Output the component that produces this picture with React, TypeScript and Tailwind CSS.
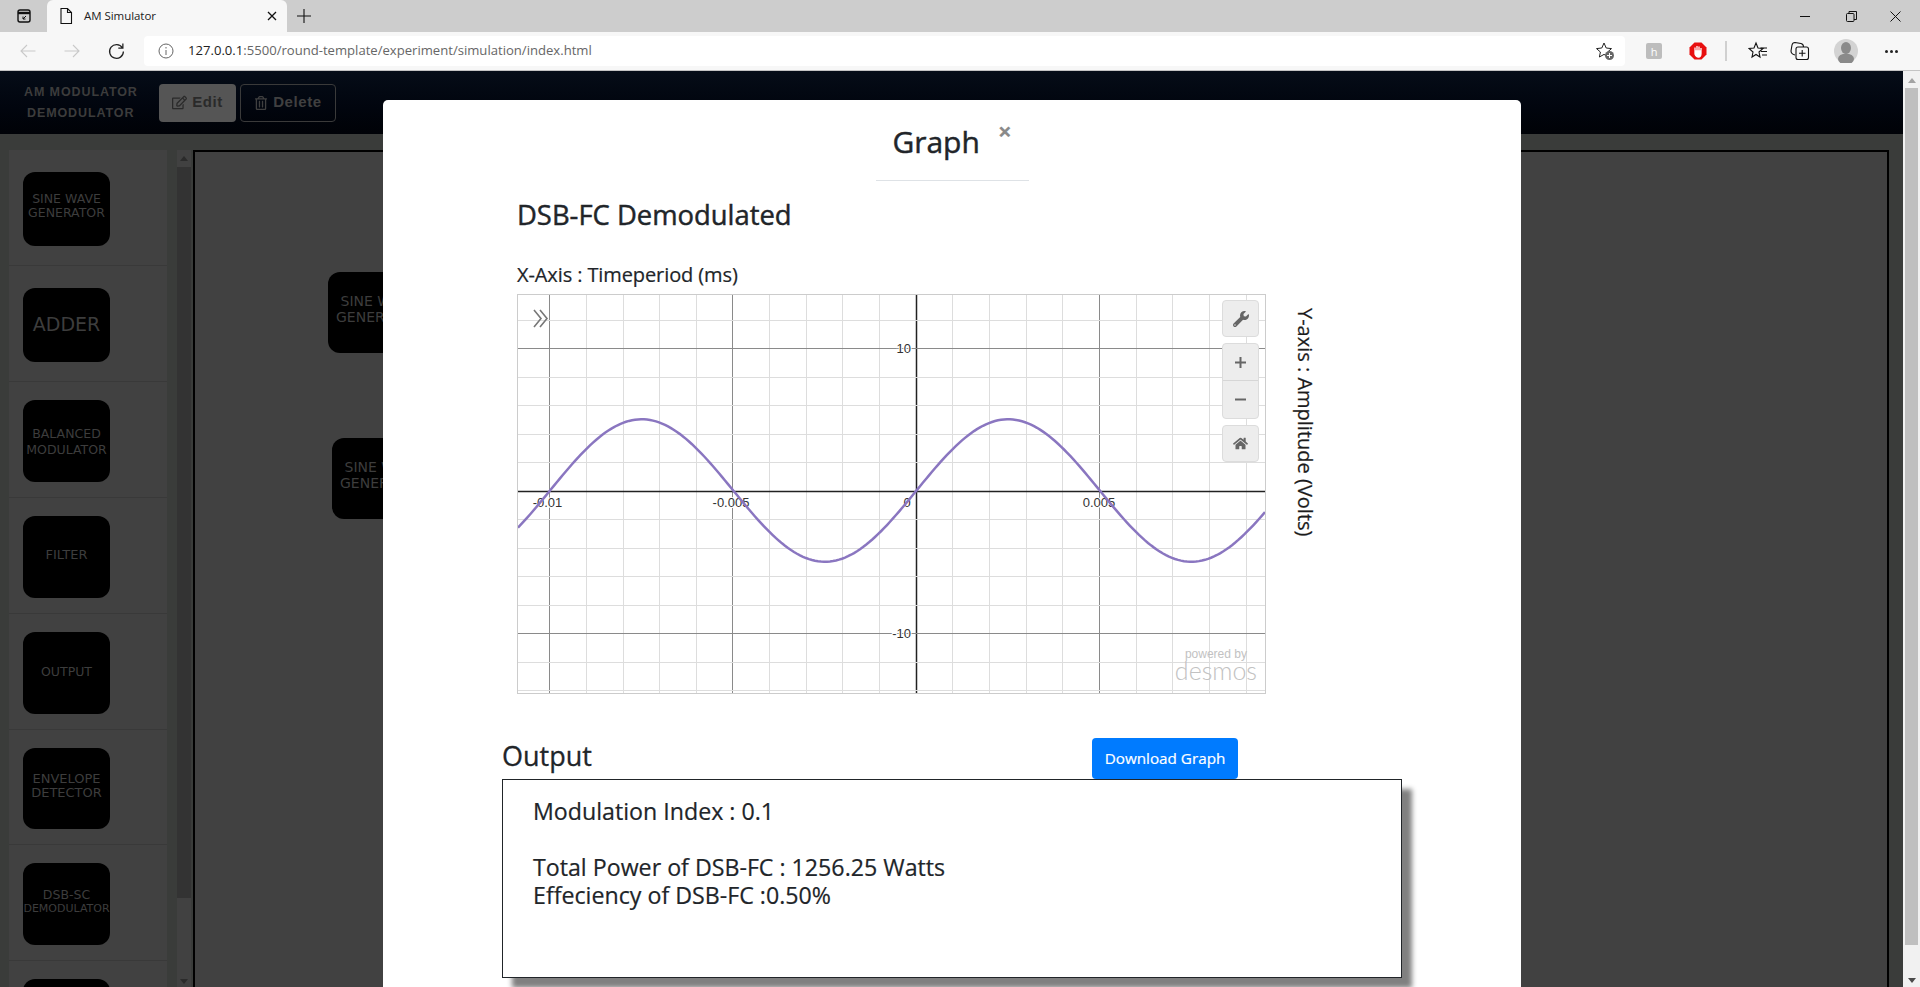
import { FaHome, FaRegEdit, FaRegTrashAlt, FaWrench } from "react-icons/fa";

const palette = [
  { lines: [["SINE WAVE", "text-[12.5px] leading-[14px]"], ["GENERATOR", "text-[12.5px] leading-[14px]"]], box: "h-[74px] pt-[20px]", row: "h-[116px] pt-[22px]" },
  { lines: [["ADDER", "text-[19px] leading-[24px]"]], box: "h-[74px] pt-[24px]", row: "h-[116px] pt-[22px]" },
  { lines: [["BALANCED", "text-[12.5px] leading-[16px]"], ["MODULATOR", "text-[12.5px] leading-[16px]"]], box: "h-[82px] pt-[26px]", row: "h-[116px] pt-[18px]" },
  { lines: [["FILTER", "text-[13px] leading-[15px]"]], box: "h-[82px] pt-[31px]", row: "h-[116px] pt-[18px]" },
  { lines: [["OUTPUT", "text-[12.5px] leading-[15px]"]], box: "h-[82px] pt-[32px]", row: "h-[116px] pt-[18px]" },
  { lines: [["ENVELOPE", "text-[13px] leading-[14px]"], ["DETECTOR", "text-[13px] leading-[14px]"]], box: "h-[81px] pt-[24px]", row: "h-[115px] pt-[18px]" },
  { lines: [["DSB-SC", "text-[12.5px] leading-[15px]"], ["DEMODULATOR", "text-[11px] leading-[14px]"]], box: "h-[82px] pt-[24px]", row: "h-[116px] pt-[18px]" },
  { lines: [], box: "h-[82px]", row: "h-[116px] pt-[18px]" },
];

const GRAPH_W = 747;
const GRAPH_H = 398;
const ORIGIN_X = 398.5;
const ORIGIN_Y = 195.5;
const MINOR_X = 36.65;
const MINOR_Y = 28.5;

function sineCurve() {
  const pts: string[] = [];
  for (let x = 0; x <= GRAPH_W; x += 3) {
    const y = ORIGIN_Y - 71.25 * Math.sin((2 * Math.PI * (x - ORIGIN_X)) / (MINOR_X * 10));
    pts.push(`${x},${y.toFixed(2)}`);
  }
  return pts.join(" ");
}

function Graph() {
  const xLines = [];
  for (let k = -10; k <= 9; k++) xLines.push(k);
  const yLines = [];
  for (let j = -6; j <= 7; j++) yLines.push(j);
  const labelStyle = { paintOrder: "stroke" as const };

  return (
    <div className="relative h-[400px] w-[749px] shrink-0 border border-[#cccccc] bg-white [-webkit-text-stroke:0]">
      <svg width={GRAPH_W} height={GRAPH_H} className="block">
        {xLines.map((k) => (
          <line
            key={k}
            x1={Math.round(397.7 + k * MINOR_X) + 0.5}
            x2={Math.round(397.7 + k * MINOR_X) + 0.5}
            y1={0}
            y2={GRAPH_H}
            stroke={k === 0 ? "#222222" : k % 5 === 0 ? "#8a8a8a" : "#dddddd"}
            strokeWidth={k === 0 ? 1.5 : 1}
          />
        ))}
        {yLines.map((j) => (
          <line
            key={j}
            x1={0}
            x2={GRAPH_W}
            y1={Math.round(ORIGIN_Y + j * MINOR_Y) + 0.5}
            y2={Math.round(ORIGIN_Y + j * MINOR_Y) + 0.5}
            stroke={j === 0 ? "#222222" : j % 5 === 0 ? "#8a8a8a" : "#dddddd"}
            strokeWidth={j === 0 ? 1.5 : 1}
          />
        ))}
        <g fontFamily="'Liberation Sans', Arial, sans-serif" fontSize="13" fill="#333333" stroke="#ffffff" strokeWidth="2" style={labelStyle}>
          <text x={393} y={57.5} textAnchor="end">10</text>
          <text x={393} y={342.5} textAnchor="end">-10</text>
          <text x={29.5} y={211.5} textAnchor="middle">-0.01</text>
          <text x={213} y={211.5} textAnchor="middle">-0.005</text>
          <text x={389} y={211.5} textAnchor="middle">0</text>
          <text x={581} y={211.5} textAnchor="middle">0.005</text>
        </g>
        <polyline points={sineCurve()} fill="none" stroke="#8a76c0" strokeWidth="2.5" />
        <g fill="none" stroke="#777777" strokeWidth="1.6">
          <path d="M16 15 L23 23.5 L16 32" />
          <path d="M22 15 L29 23.5 L22 32" />
        </g>
      </svg>

      <div className="absolute top-[5px] right-[6px] flex h-[37px] w-[37px] items-center justify-center rounded border border-[#dcdcdc] bg-[#ededed]">
        <FaWrench className="h-[16px] w-[16px] text-[#666666]" />
      </div>
      <div className="absolute top-[48px] right-[6px] flex h-[76px] w-[37px] flex-col rounded border border-[#dcdcdc] bg-[#ededed] text-[#666666]">
        <div className="flex h-[37px] items-center justify-center border-b border-[#d6d6d6]">
          <svg width="13" height="13" viewBox="0 0 13 13">
            <path d="M6.5 1 V12 M1 6.5 H12" stroke="currentColor" strokeWidth="2" />
          </svg>
        </div>
        <div className="flex flex-1 items-center justify-center">
          <svg width="13" height="13" viewBox="0 0 13 13">
            <path d="M1 6.5 H12" stroke="currentColor" strokeWidth="2" />
          </svg>
        </div>
      </div>
      <div className="absolute top-[130px] right-[6px] flex h-[37px] w-[37px] items-center justify-center rounded border border-[#dcdcdc] bg-[#ededed]">
        <FaHome className="h-[15px] w-[15px] text-[#666666]" />
      </div>

      <div className="absolute right-[8px] bottom-[13px] flex flex-col items-center text-[#c2c2c2]">
        <span className="font-['Liberation_Sans',sans-serif] text-[12px] leading-[12px]">powered by</span>
        <span className="font-['Lato',sans-serif] text-[25px] leading-[20px] font-light">desmos</span>
      </div>
    </div>
  );
}

function BrowserChrome() {
  return (
    <div className="shrink-0 font-['Open_Sans',sans-serif]">
      <div className="flex h-[32px] items-end bg-[#cdcdcd]">
        <div className="flex h-[32px] w-[47px] items-center justify-center">
          <svg width="16" height="16" viewBox="0 0 16 16" fill="none" stroke="#111111" strokeWidth="1.4">
            <rect x="2" y="2" width="12" height="12" rx="2" />
            <path d="M2 5 H14" strokeWidth="2.4" />
            <path d="M10 8 L7 11 M7 8.5 V11 H9.5" strokeWidth="1" />
          </svg>
        </div>
        <div className="flex h-[32px] w-[240px] items-center rounded-t-md bg-[#f7f7f7] pr-[10px] pl-[12px]">
          <svg width="14" height="18" viewBox="0 0 14 18" fill="none" stroke="#111111" strokeWidth="1.1">
            <path d="M2 1.5 H8.5 L12.5 5.5 V16.5 H2 Z M8.5 1.5 V5.5 H12.5" />
          </svg>
          <span className="ml-[11px] flex-1 text-[11.5px] tracking-[-0.05px] text-[#222222]">AM Simulator</span>
          <svg width="10" height="10" viewBox="0 0 10 10" stroke="#111111" strokeWidth="1.3">
            <path d="M1 1 L9 9 M9 1 L1 9" />
          </svg>
        </div>
        <div className="flex h-[32px] w-[34px] items-center justify-center">
          <svg width="14" height="14" viewBox="0 0 14 14" stroke="#111111" strokeWidth="1.1">
            <path d="M7 0 V14 M0 7 H14" />
          </svg>
        </div>
        <div className="ml-auto flex h-[32px] items-center">
          <div className="flex w-[46px] justify-center">
            <svg width="10" height="10" viewBox="0 0 10 10" stroke="#111111" strokeWidth="1">
              <path d="M0 5.5 H10" />
            </svg>
          </div>
          <div className="flex w-[46px] justify-center">
            <svg width="11" height="11" viewBox="0 0 11 11" fill="none" stroke="#111111" strokeWidth="1">
              <rect x="0.5" y="2.5" width="7.5" height="8" rx="1" />
              <path d="M3 2.5 V0.5 H10.5 V8.5 H8" />
            </svg>
          </div>
          <div className="flex w-[46px] justify-center pr-[4px]">
            <svg width="11" height="11" viewBox="0 0 11 11" stroke="#111111" strokeWidth="1">
              <path d="M0.5 0.5 L10.5 10.5 M10.5 0.5 L0.5 10.5" />
            </svg>
          </div>
        </div>
      </div>
      <div className="flex h-[39px] items-center border-b border-[#c4c4c4] bg-[#f7f7f7]">
        <div className="flex w-[144px] items-center">
          <div className="flex w-[56px] justify-center">
            <svg width="16" height="14" viewBox="0 0 16 14" fill="none" stroke="#c9c9c9" strokeWidth="1.1">
              <path d="M15.5 7 H1 M7 1 L1 7 L7 13" />
            </svg>
          </div>
          <div className="-ml-[12px] flex w-[56px] justify-center">
            <svg width="16" height="14" viewBox="0 0 16 14" fill="none" stroke="#c9c9c9" strokeWidth="1.1">
              <path d="M0.5 7 H15 M9 1 L15 7 L9 13" />
            </svg>
          </div>
          <div className="-ml-[12px] flex w-[56px] justify-center">
            <svg width="17" height="17" viewBox="0 0 16 16" fill="none" stroke="#222222" strokeWidth="1.2">
              <path d="M13.5 4.5 A6.5 6.5 0 1 0 14.5 8 M14 0.5 V4.8 H9.7" />
            </svg>
          </div>
        </div>
        <div className="flex h-[30px] w-[1481px] items-center rounded bg-white">
          <svg width="16" height="16" viewBox="0 0 16 16" fill="none" stroke="#666666" strokeWidth="1" className="ml-[14px]">
            <circle cx="8" cy="8" r="7" />
            <path d="M8 7 V12 M8 4 V5.5" />
          </svg>
          <span className="ml-[14px] text-[13.1px] text-[#666666]">
            <span className="text-[#222222]">127.0.0.1</span>:5500/round-template/experiment/simulation/index.html
          </span>
          <svg width="20" height="20" viewBox="0 0 20 20" fill="none" stroke="#222222" strokeWidth="1" className="mr-[10px] ml-auto">
            <path d="M9 2 L11.2 7 L16.5 7.6 L12.6 11 L13.6 16 L9 13.4 L4.4 16 L5.4 11 L1.5 7.6 L6.8 7 Z" />
            <circle cx="14.5" cy="14.5" r="4.5" fill="#666666" stroke="none" />
            <path d="M14.5 12 V17 M12 14.5 H17" stroke="#ffffff" />
          </svg>
        </div>
        <div className="relative flex flex-1 items-center">
          <div className="ml-[21px] flex h-[16px] w-[16px] items-center justify-center rounded-[2px] bg-[#bdbdbd] text-[11px] leading-none text-white">h</div>
          <svg width="18" height="18" viewBox="0 0 18 18" className="ml-[27px]">
            <path d="M5.5 0.5 H12.5 L17.5 5.5 V12.5 L12.5 17.5 H5.5 L0.5 12.5 V5.5 Z" fill="#e81010" />
            <path d="M6 9 V5.5 M8 9 V4 M10 9 V4.5 M12 10 V6 M6 9 V12 Q7 15 9.5 15 Q12 15 12 11.5 V9 Z" fill="#ffffff" stroke="#ffffff" strokeWidth="1.3" />
          </svg>
          <div className="ml-[18px] h-[20px] w-[2px] bg-[#d0d0d0]" />
          <svg width="20" height="20" viewBox="0 0 20 20" fill="none" stroke="#111111" strokeWidth="1.1" className="ml-[21px]">
            <path d="M8 2 L10 7 L15 7.5 L11 11 L12 16 L8 13.5 L4 16 L5 11 L1 7.5 L6 7 Z" />
            <path d="M12.5 7 H19 M13 10.5 H19 M14 14 H19" />
          </svg>
          <svg width="20" height="20" viewBox="0 0 20 20" fill="none" stroke="#111111" strokeWidth="1.1" className="ml-[22px]">
            <path d="M5 14 Q1 13 1 10 L2 4 Q2.5 1.5 5 1.5 L11 2.5 Q13.5 3 13.5 6" />
            <rect x="6" y="6" width="12.5" height="12.5" rx="2" />
            <path d="M12.2 9 V15.5 M9 12.2 H15.5" />
          </svg>
          <svg width="24" height="24" viewBox="0 0 24 24" className="ml-[24px]">
            <circle cx="12" cy="12" r="12" fill="#d3d3d3" />
            <ellipse cx="12" cy="9" rx="5" ry="6" fill="#8a8a8a" />
            <ellipse cx="12" cy="20" rx="8" ry="5.5" fill="#8a8a8a" />
          </svg>
          <div className="ml-[27px] flex gap-[2px]">
            <div className="h-[3px] w-[3px] rounded-full bg-[#222222]" />
            <div className="h-[3px] w-[3px] rounded-full bg-[#222222]" />
            <div className="h-[3px] w-[3px] rounded-full bg-[#222222]" />
          </div>
        </div>
      </div>
    </div>
  );
}

function Navbar() {
  return (
    <div className="flex h-[63px] shrink-0 items-center bg-gradient-to-b from-[#060d18] to-[#000207] pl-[24px] font-['Liberation_Sans',sans-serif] font-bold">
      <div className="flex w-[135px] flex-col items-start text-[12.5px] leading-[21px] tracking-[0.9px] text-[#3c3c3c]">
        <span>AM MODULATOR</span>
        <span className="pl-[3px]">DEMODULATOR</span>
      </div>
      <button className="flex h-[38px] w-[77px] items-center justify-center gap-[5px] rounded bg-[#555555] text-[15px] tracking-[0.6px] text-[#2a2a2a]">
        <FaRegEdit className="h-[15px] w-[15px]" />
        Edit
      </button>
      <button className="ml-[4px] flex h-[38px] w-[96px] items-center justify-center gap-[5px] rounded border border-[#3a3a3a] text-[15px] tracking-[0.6px] text-[#404040]">
        <FaRegTrashAlt className="h-[14px] w-[14px]" />
        Delete
      </button>
    </div>
  );
}

function Palette() {
  return (
    <div className="flex h-[837px] shrink-0">
      <div className="w-[158px] font-['DejaVu_Sans',sans-serif]">
        {palette.map((item, i) => (
          <div key={i} className={`${item.row} border-b border-[#393939] bg-[#414141] pl-[14px]`}>
            <div className={`${item.box} flex w-[87px] flex-col rounded-xl bg-black text-center text-[#3d3d3d]`}>
              {item.lines.map(([text, cls]) => (
                <span key={text} className={`whitespace-nowrap ${cls}`}>{text}</span>
              ))}
            </div>
          </div>
        ))}
      </div>
      <div className="ml-[10px] flex w-[14px] flex-col items-center bg-[#414141]">
        <div className="mt-[6px] h-0 w-0 border-x-[4px] border-b-[5px] border-x-transparent border-b-[#2b2b2b]" />
        <div className="mt-[6px] h-[731px] w-full shrink-0 bg-[#333333]" />
        <div className="mt-[81px] h-0 w-0 border-x-[4px] border-t-[5px] border-x-transparent border-t-[#2b2b2b]" />
      </div>
    </div>
  );
}

function Canvas() {
  return (
    <div className="relative ml-[2px] h-[900px] w-[1696px] border-2 border-black bg-[#414141] font-['DejaVu_Sans',sans-serif] text-[14px] leading-[16px] text-[#3d3d3d]">
      <div className="absolute top-[120px] left-[133px] flex h-[81px] w-[102px] flex-col rounded-xl bg-black pt-[21px] text-center">
        <span>SINE WAVE</span>
        <span>GENERATOR</span>
      </div>
      <div className="absolute top-[286px] left-[137px] flex h-[81px] w-[102px] flex-col rounded-xl bg-black pt-[21px] text-center">
        <span>SINE WAVE</span>
        <span>GENERATOR</span>
      </div>
    </div>
  );
}

function Modal() {
  return (
    <div className="absolute top-[29px] left-[383px] h-[900px] w-[1138px] rounded-[5px] bg-white font-['Open_Sans',sans-serif] text-[#212529] [-webkit-text-stroke:0.2px]">
      <div className="mx-auto flex h-[81px] w-[153px] items-start justify-center gap-[18px] border-b border-[#dee2e6]">
        <h2 className="mt-[18px] text-[30px] leading-[48px] [-webkit-text-stroke:0.45px]">Graph</h2>
        <span className="mt-[13px] text-[24px] leading-[36px] font-bold text-[#8a8a8a]">×</span>
      </div>

      <div className="pl-[134px]">
        <h3 className="mt-[17px] text-[27.4px] leading-[34px] [-webkit-text-stroke:0.45px]">DSB-FC Demodulated</h3>
        <p className="mt-[29px] text-[20px] leading-[28px] tracking-[-0.1px]">X-Axis : Timeperiod (ms)</p>
        <div className="mt-[5px] flex">
          <Graph />
          <span className="mt-[14px] ml-[25px] h-[240px] text-[20px] leading-[28px] whitespace-nowrap text-[#1c1c1c] [writing-mode:vertical-rl]">
            Y-axis : Amplitude (Volts)
          </span>
        </div>
      </div>

      <div className="mt-[44px] flex h-[41px] pl-[119px]">
        <h3 className="w-[590px] text-[27px] leading-[36px] [-webkit-text-stroke:0.3px]">Output</h3>
        <button className="h-[41px] w-[146px] rounded bg-[#007bff] text-[15.25px] text-white">
          Download Graph
        </button>
      </div>

      <div className="ml-[119px] h-[199px] w-[900px] border-[1.5px] border-[#212529] bg-white pt-[17px] pl-[30px] text-[23.2px] leading-[28px] shadow-[10px_10px_5px_#808080]">
        <p>Modulation Index : 0.1</p>
        <p className="mt-[28px]">Total Power of DSB-FC : 1256.25 Watts</p>
        <p>Effeciency of DSB-FC :0.50%</p>
      </div>
    </div>
  );
}

export default function App() {
  return (
    <div className="flex h-[987px] w-[1920px] flex-col overflow-hidden">
      <BrowserChrome />
      <div className="flex min-h-0 flex-1">
        <div className="relative min-w-0 flex-1 overflow-hidden bg-[#3a3c3a]">
          <Navbar />
          <div className="flex pt-[16px] pl-[9px]">
            <Palette />
            <Canvas />
          </div>
          <Modal />
        </div>
        <div className="flex w-[17px] shrink-0 flex-col items-center bg-[#f1f1f1]">
          <div className="mt-[7px] h-0 w-0 border-x-[4px] border-b-[5px] border-x-transparent border-b-[#a3a3a3]" />
          <div className="mt-[5px] h-[857px] w-[13px] shrink-0 bg-[#bfbfbf]" />
          <div className="mt-[33px] h-0 w-0 border-x-[4px] border-t-[5px] border-x-transparent border-t-[#4a4a4a]" />
        </div>
      </div>
    </div>
  );
}
